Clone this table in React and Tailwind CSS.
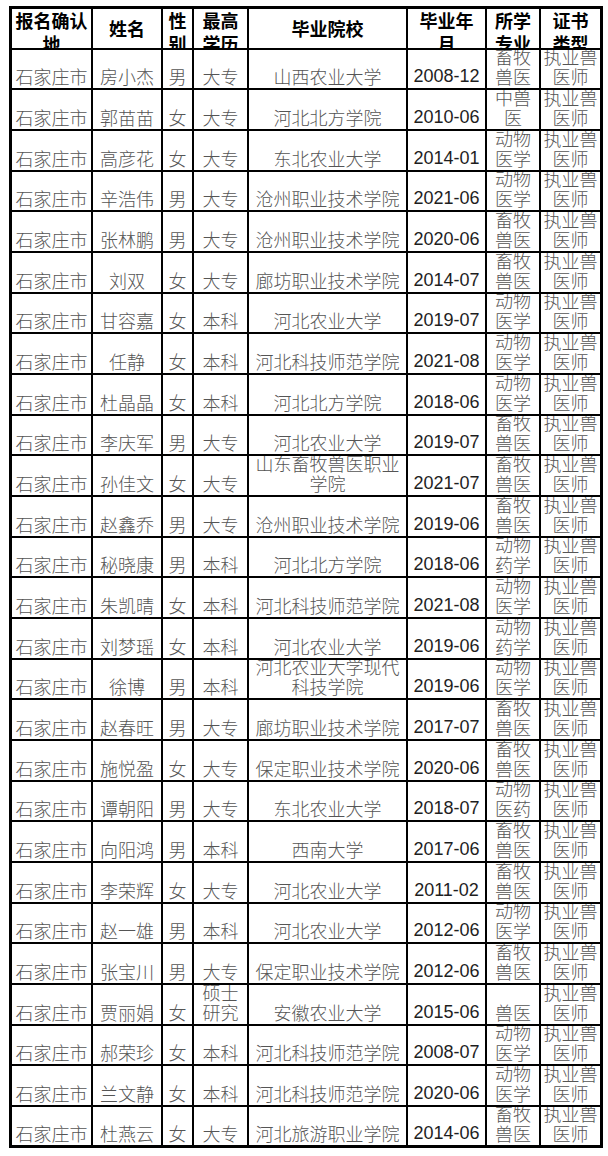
import React from 'react';

const cols = 'grid-cols-[81px_70px_31px_55px_159px_79px_54px_62px]';

const header = [
  { t: '报名确认地', multi: true },
  { t: '姓名' },
  { t: '性别', multi: true },
  { t: '最高学历', multi: true },
  { t: '毕业院校' },
  { t: '毕业年月', multi: true },
  { t: '所学专业', multi: true },
  { t: '证书类型', multi: true },
];

const rows = [
  ['房小杰', '男', '大专', '山西农业大学', '2008-12', '畜牧兽医'],
  ['郭苗苗', '女', '大专', '河北北方学院', '2010-06', '中兽医'],
  ['高彦花', '女', '大专', '东北农业大学', '2014-01', '动物医学'],
  ['辛浩伟', '男', '大专', '沧州职业技术学院', '2021-06', '动物医学'],
  ['张林鹏', '男', '大专', '沧州职业技术学院', '2020-06', '畜牧兽医'],
  ['刘双', '女', '大专', '廊坊职业技术学院', '2014-07', '畜牧兽医'],
  ['甘容嘉', '女', '本科', '河北农业大学', '2019-07', '动物医学'],
  ['任静', '女', '本科', '河北科技师范学院', '2021-08', '动物医学'],
  ['杜晶晶', '女', '本科', '河北北方学院', '2018-06', '动物医学'],
  ['李庆军', '男', '大专', '河北农业大学', '2019-07', '畜牧兽医'],
  ['孙佳文', '女', '大专', '山东畜牧兽医职业学院', '2021-07', '畜牧兽医'],
  ['赵鑫乔', '男', '大专', '沧州职业技术学院', '2019-06', '畜牧兽医'],
  ['秘晓康', '男', '本科', '河北北方学院', '2018-06', '动物药学'],
  ['朱凯晴', '女', '本科', '河北科技师范学院', '2021-08', '动物医学'],
  ['刘梦瑶', '女', '本科', '河北农业大学', '2019-06', '动物药学'],
  ['徐博', '男', '本科', '河北农业大学现代科技学院', '2019-06', '动物医学'],
  ['赵春旺', '男', '大专', '廊坊职业技术学院', '2017-07', '畜牧兽医'],
  ['施悦盈', '女', '大专', '保定职业技术学院', '2020-06', '畜牧兽医'],
  ['谭朝阳', '男', '大专', '东北农业大学', '2018-07', '动物医药'],
  ['向阳鸿', '男', '本科', '西南大学', '2017-06', '畜牧兽医'],
  ['李荣辉', '女', '大专', '河北农业大学', '2011-02', '畜牧兽医'],
  ['赵一雄', '男', '本科', '河北农业大学', '2012-06', '动物医学'],
  ['张宝川', '男', '大专', '保定职业技术学院', '2012-06', '畜牧兽医'],
  ['贾丽娟', '女', '硕士研究', '安徽农业大学', '2015-06', '兽医'],
  ['郝荣珍', '女', '本科', '河北科技师范学院', '2008-07', '动物医学'],
  ['兰文静', '女', '本科', '河北科技师范学院', '2020-06', '动物医学'],
  ['杜燕云', '女', '大专', '河北旅游职业学院', '2014-06', '畜牧兽医'],
];

const cjk = "font-['Noto_Sans_CJK_SC',sans-serif]";
const latin = "font-['Liberation_Sans','Noto_Sans_CJK_SC',sans-serif]";

function Cell({ children, last, bottom, num }) {
  return (
    <div
      className={`h-[40.68px] overflow-hidden flex flex-col justify-end items-center px-[2px] pb-[2px] text-center text-[18px] leading-[20px] border-b-2 border-black ${
        last ? 'border-r-[3px]' : 'border-r-2'
      } ${bottom ? 'border-b-[3px]' : ''} ${
        num ? `${latin} text-[#1e1e1e]` : `${cjk} font-light text-[#555555]`
      }`}
    >
      <span className="block w-full break-all">{children}</span>
    </div>
  );
}

export default function App() {
  return (
    <div className="w-[608px] h-[1156px] bg-white pt-[6px] pl-[9px]">
      <div className={`grid ${cols} w-[594px] border-t-[3px] border-l-[3px] border-black`}>
        {header.map((h, i) => (
          <div
            key={h.t}
            className={`h-[40.68px] overflow-hidden flex flex-col items-center px-[3px] text-center text-[18px] leading-[23px] font-bold text-black border-b-2 border-black ${cjk} ${
              h.multi ? 'justify-start' : 'justify-center'
            } ${i === header.length - 1 ? 'border-r-[3px]' : 'border-r-2'}`}
          >
            <span className="block w-full">{h.t}</span>
          </div>
        ))}
        {rows.map((r, ri) => {
          const bottom = ri === rows.length - 1;
          return (
            <React.Fragment key={ri}>
              <Cell bottom={bottom}>石家庄市</Cell>
              <Cell bottom={bottom}>{r[0]}</Cell>
              <Cell bottom={bottom}>{r[1]}</Cell>
              <Cell bottom={bottom}>{r[2]}</Cell>
              <Cell bottom={bottom}>{r[3]}</Cell>
              <Cell bottom={bottom} num>{r[4]}</Cell>
              <Cell bottom={bottom}>{r[5]}</Cell>
              <Cell bottom={bottom} last>执业兽医师</Cell>
            </React.Fragment>
          );
        })}
      </div>
    </div>
  );
}
